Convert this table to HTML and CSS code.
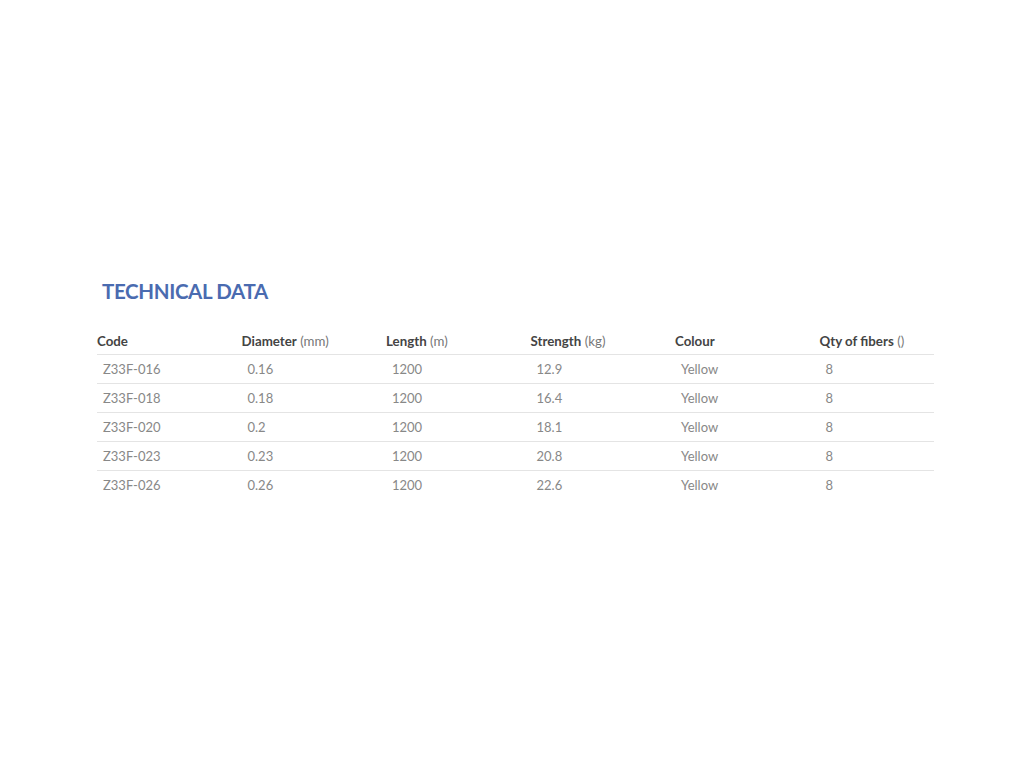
FILE: index.html
```html
<!DOCTYPE html>
<html>
<head>
<meta charset="utf-8">
<link rel="stylesheet" href="styles.css">
</head>
<body>
<section class="tech">
  <h2 class="title">TECHNICAL DATA</h2>
  <div class="table">
    <div class="row head">
      <div class="cell"><b>Code</b></div>
      <div class="cell"><b>Diameter</b> <span class="unit">(mm)</span></div>
      <div class="cell"><b>Length</b> <span class="unit">(m)</span></div>
      <div class="cell"><b>Strength</b> <span class="unit">(kg)</span></div>
      <div class="cell"><b>Colour</b></div>
      <div class="cell"><b>Qty of fibers</b> <span class="unit">()</span></div>
    </div>
    <div class="row data"><div class="cell">Z33F-016</div><div class="cell">0.16</div><div class="cell">1200</div><div class="cell">12.9</div><div class="cell">Yellow</div><div class="cell">8</div></div>
    <div class="row data"><div class="cell">Z33F-018</div><div class="cell">0.18</div><div class="cell">1200</div><div class="cell">16.4</div><div class="cell">Yellow</div><div class="cell">8</div></div>
    <div class="row data"><div class="cell">Z33F-020</div><div class="cell">0.2</div><div class="cell">1200</div><div class="cell">18.1</div><div class="cell">Yellow</div><div class="cell">8</div></div>
    <div class="row data"><div class="cell">Z33F-023</div><div class="cell">0.23</div><div class="cell">1200</div><div class="cell">20.8</div><div class="cell">Yellow</div><div class="cell">8</div></div>
    <div class="row data"><div class="cell">Z33F-026</div><div class="cell">0.26</div><div class="cell">1200</div><div class="cell">22.6</div><div class="cell">Yellow</div><div class="cell">8</div></div>
  </div>
</section>
</body>
</html>
```

FILE: styles.css
```css
html, body {
  margin: 0;
  padding: 0;
  background: #ffffff;
}
body {
  font-family: Lato, "Open Sans", sans-serif;
}
.tech {
  padding: 278px 90px 0 92px;
}
.title {
  margin: 0 0 0 10px;
  font-size: 20.5px;
  font-weight: 700;
  line-height: 26px;
  color: #4a6bb0;
  letter-spacing: -0.35px;
}
.table {
  margin-top: 29px;
  width: 842px;
}
.row {
  display: grid;
  grid-template-columns: 144.5px 144.5px 144.5px 144.5px 144.5px 1fr;
  align-items: center;
  font-size: 13px;
}
.head {
  height: 21px;
  color: #444;
  align-items: start;
  font-size: 13.3px;
}
.head .cell {
  padding-left: 5px;
  line-height: 16px;
}
.head b {
  font-weight: 700;
}
.unit {
  color: #777;
}
.data {
  height: 28px;
  border-top: 1px solid #e4e4e4;
  margin-left: 5px;
  color: #888;
}
.data .cell {
  padding-left: 6px;
}
```
